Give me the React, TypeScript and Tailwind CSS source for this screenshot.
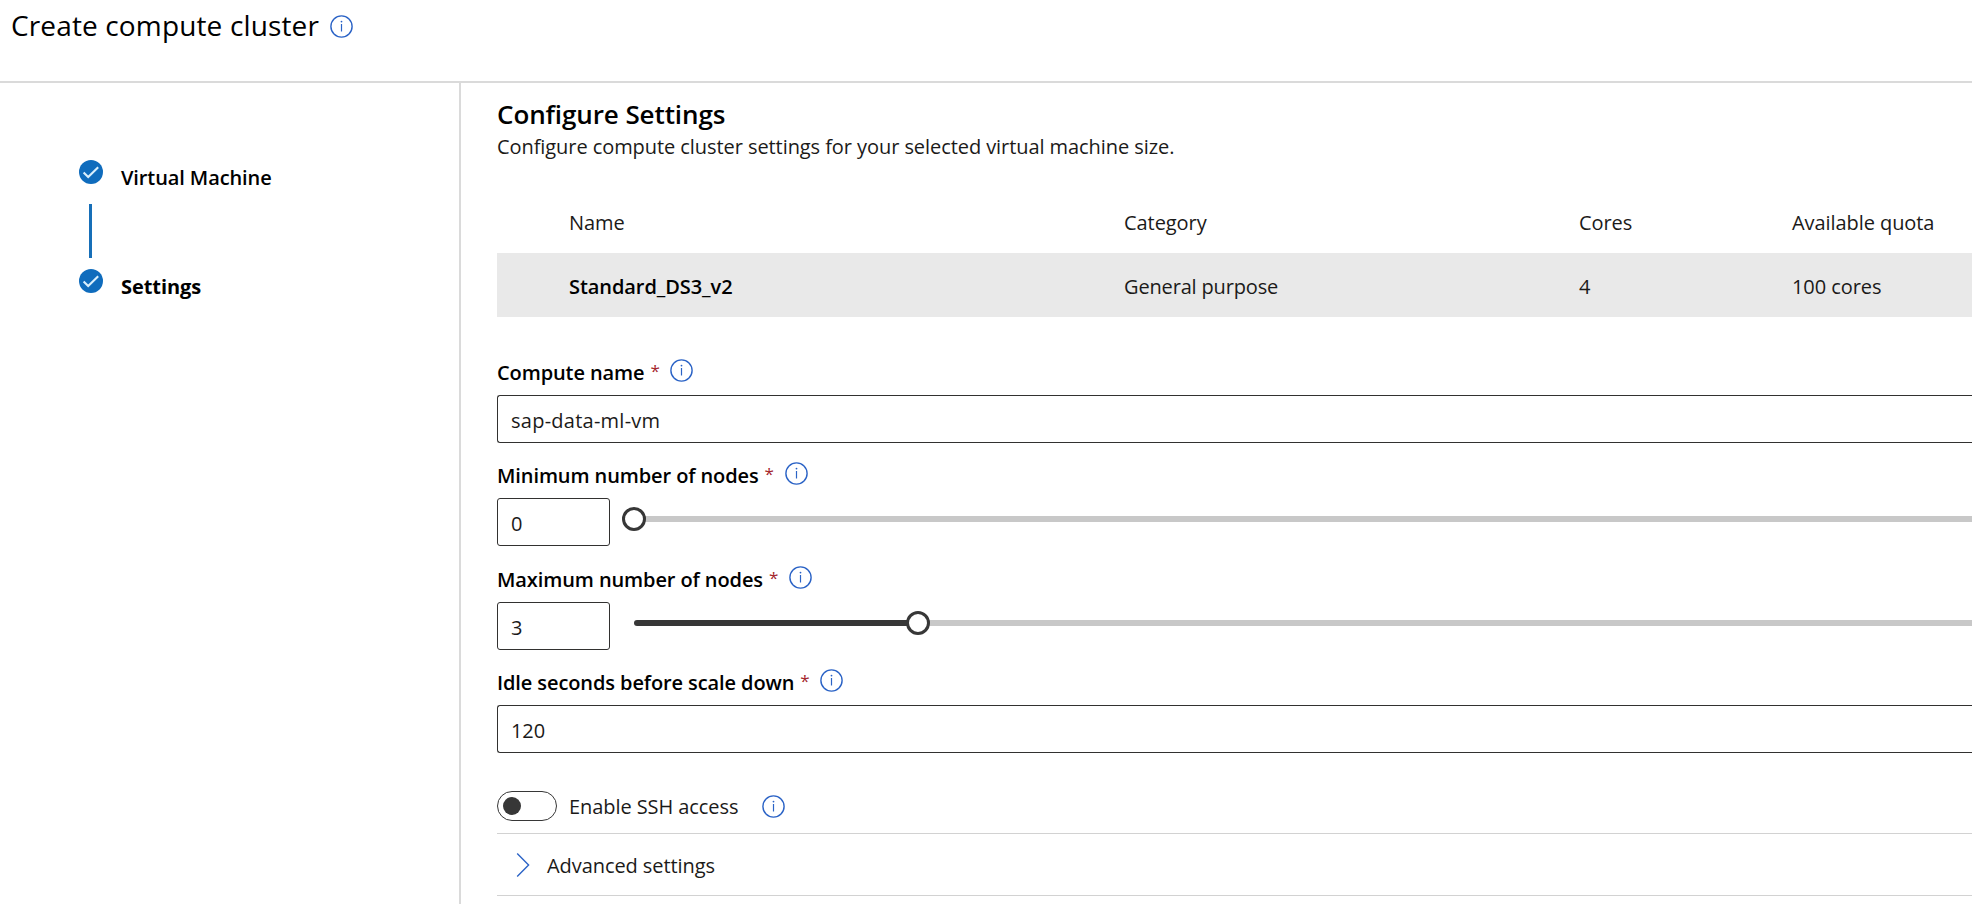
import type { ReactNode } from "react";

function InfoIcon({ className = "" }: { className?: string }) {
  return (
    <svg className={`size-[23px] shrink-0 ${className}`} viewBox="0 0 23 23" fill="none">
      <circle cx="11.5" cy="11.5" r="10.6" stroke="#2b63c6" strokeWidth="1.4" />
      <path d="M11.5 9v7.5" stroke="#2b63c6" strokeWidth="1.2" />
      <circle cx="11.5" cy="6.6" r="0.9" fill="#2b63c6" />
    </svg>
  );
}

function StepCheck() {
  return (
    <svg className="size-6 shrink-0" viewBox="0 0 24 24" fill="none">
      <circle cx="12" cy="12" r="12" fill="#0f6cbd" />
      <path d="M4.6 12.4l4.6 4.6L19.2 7.2" stroke="#d9effc" strokeWidth="2.1" />
    </svg>
  );
}

function FieldLabel({ text, className = "" }: { text: string; className?: string }) {
  return (
    <div className={`flex h-[30px] items-start leading-[31px] ${className}`}>
      <span className="font-semibold tracking-[-0.1px] text-black">{text}</span>
      <span className="ml-[6px] w-[8px] text-[17px] leading-[28px] text-[#a4262c]">*</span>
      <InfoIcon className="ml-[12px] mt-[2px]" />
    </div>
  );
}

function TextBox({ value, className = "" }: { value: string; className?: string }) {
  return (
    <div className={`mt-2 flex h-12 items-center rounded-l-[3px] border border-[#323130] pl-[13px] pt-[3px] ${className}`}>
      {value}
    </div>
  );
}

function NodeSlider({ value, children }: { value: string; children: ReactNode }) {
  return (
    <div className="flex">
      <TextBox value={value} className="w-[113px] shrink-0 rounded-r-[3px]" />
      <div className="ml-6 mt-[17px] flex h-6 flex-1 items-center">{children}</div>
    </div>
  );
}

function Thumb() {
  return <span className="relative -mx-3 size-6 shrink-0 rounded-full border-[3px] border-[#373737] bg-white" />;
}

export default function App() {
  return (
    <div className="flex h-[904px] w-full flex-col overflow-hidden whitespace-nowrap bg-white font-['Open_Sans','Noto_Sans',sans-serif] text-[20px] leading-[31px] tracking-[-0.07px] text-[#1b1a19]">
      <header className="flex h-[83px] shrink-0 items-start border-b-2 border-[#dadada] pl-[11px] pt-[5px]">
        <h1 className="text-[28px] leading-[40px] tracking-[0.14px] text-black">Create compute cluster</h1>
        <InfoIcon className="ml-[11px] mt-[10px]" />
      </header>
      <div className="flex min-h-0 flex-1">
        <nav className="w-[461px] shrink-0 border-r-2 border-[#dadada] pl-[79px] pt-[77px] text-black">
          <div className="flex h-6">
            <StepCheck />
            <span className="ml-[18px] mt-[2px] font-semibold tracking-[-0.1px]">Virtual Machine</span>
          </div>
          <div className="my-5 ml-[10px] h-[54px] w-[3px] bg-[#176fb8]" />
          <div className="-mt-[9px] flex h-6">
            <StepCheck />
            <span className="ml-[18px] mt-[2px] font-bold">Settings</span>
          </div>
        </nav>
        <main className="flex min-w-0 flex-1 flex-col pl-9 pt-[15px]">
          <h2 className="text-[26px] font-semibold leading-8 tracking-[-0.1px] text-black">Configure Settings</h2>
          <p className="mt-[2px] h-7 leading-[29px]">
            Configure compute cluster settings for your selected virtual machine size.
          </p>
          <div className="mt-8 grid h-[61px] shrink-0 grid-cols-[555px_455px_213px_1fr] items-center pl-[72px]">
            <span>Name</span>
            <span>Category</span>
            <span>Cores</span>
            <span>Available quota</span>
          </div>
          <div className="grid h-16 shrink-0 grid-cols-[555px_455px_213px_1fr] items-center bg-[#e9e9e9] pl-[72px] pt-[3px]">
            <span className="font-semibold text-black">Standard_DS3_v2</span>
            <span className="tracking-[-0.16px]">General purpose</span>
            <span>4</span>
            <span>100 cores</span>
          </div>

          <FieldLabel text="Compute name" className="mt-10" />
          <TextBox value="sap-data-ml-vm" className="border-r-0 tracking-[0.25px]" />

          <FieldLabel text="Minimum number of nodes" className="mt-[17px]" />
          <NodeSlider value="0">
            <Thumb />
            <span className="h-[6px] flex-1 bg-[#c8c8c8]" />
          </NodeSlider>

          <FieldLabel text="Maximum number of nodes" className="mt-[18px]" />
          <NodeSlider value="3">
            <span className="h-[6px] w-[284px] rounded-l-full bg-[#373737]" />
            <Thumb />
            <span className="h-[6px] flex-1 bg-[#c8c8c8]" />
          </NodeSlider>

          <FieldLabel text="Idle seconds before scale down" className="mt-[17px]" />
          <TextBox value="120" className="border-r-0" />

          <div className="mt-[38px] flex h-[30px] shrink-0 items-center">
            <span className="flex h-[30px] w-[60px] items-center rounded-full border border-[#373737] pl-[5px]">
              <span className="size-[18px] rounded-full bg-[#373737]" />
            </span>
            <span className="ml-[12px] pt-px">Enable SSH access</span>
            <InfoIcon className="ml-[24px]" />
          </div>

          <div className="mt-3 flex h-[63px] shrink-0 items-center border-y border-[#d2d2d2] pl-[19px]">
            <svg className="h-6 w-[14px]" viewBox="0 0 14 24" fill="none">
              <path d="M1.2 0.5L12.6 12L1.2 23.5" stroke="#2b63c6" strokeWidth="1.4" />
            </svg>
            <span className="ml-[17px] pt-[2px]">Advanced settings</span>
          </div>
        </main>
      </div>
    </div>
  );
}
